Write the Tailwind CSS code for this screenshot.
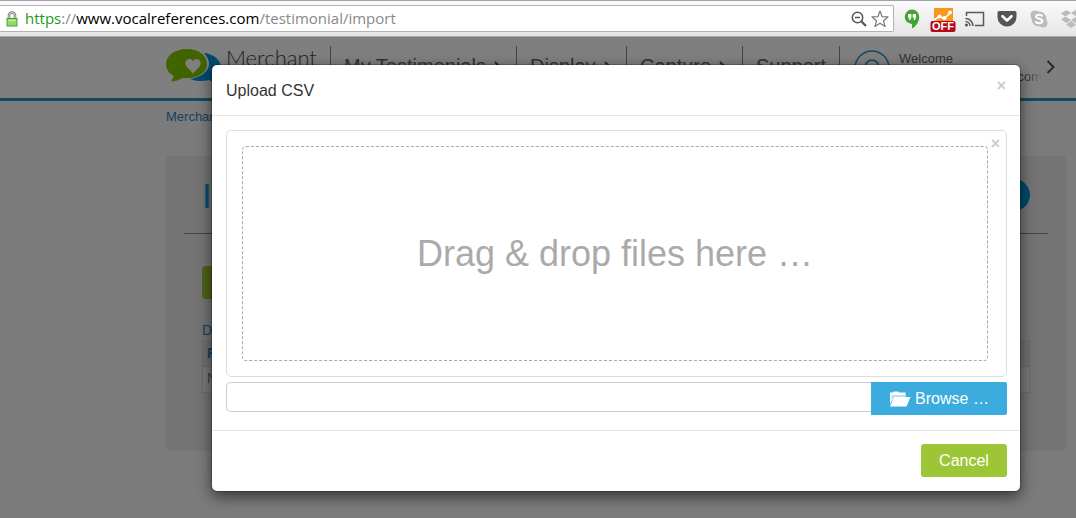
<!DOCTYPE html>
<html lang="en">
<head>
    <meta charset="UTF-8">
    <meta name="viewport" content="width=device-width, initial-scale=1.0">
    <title>Upload CSV</title>
    <script src="https://cdn.jsdelivr.net/npm/@tailwindcss/browser@4"></script>
</head>
<body class="h-screen flex flex-col overflow-hidden font-['Liberation_Sans',Arial,sans-serif]">
    <!-- Browser toolbar -->
    <div class="h-[37px] shrink-0 flex items-center border-t border-b border-t-[#a3a1ac] border-b-[#a9a9a9] bg-linear-to-b from-[#fbfafc] to-[#e6e6e6]">
        <div class="h-[27px] w-[894px] shrink-0 flex items-center border border-l-0 border-[#b3b3b3] rounded-r-xs bg-white pl-[6px] pr-1">
            <svg class="w-3 h-4 shrink-0" viewBox="0 0 12 16">
                <path d="M3 8V4.500a3 3 0 0 1 6 0V8" fill="none" stroke="#777" stroke-width="2.600"/>
                <path d="M3 8V4.500a3 3 0 0 1 6 0V8" fill="none" stroke="#ddd" stroke-width="1"/>
                <rect x="1" y="7.500" width="10" height="7.500" fill="#8fdc6a" stroke="#4f9e33"/>
                <path d="M2 9.500h8" stroke="#c0f0a4"/>
            </svg>
            <div role="textbox" aria-label="Address" class="ml-[7px] pb-[2px] flex-1 whitespace-nowrap text-[15px] leading-5 font-['Open_Sans','Noto_Sans',sans-serif] text-[#888]"><span class="text-[#1a9a1a]">https</span>://<span class="text-black">www.vocalreferences.com</span>/testimonial/import</div>
            <svg class="w-4 h-4 mr-1 shrink-0" viewBox="0 0 16 16" fill="none" stroke="#555">
                <circle cx="6.500" cy="6.500" r="5.200" stroke-width="1.500"/>
                <path d="M4 6.500h5" stroke-width="1.500"/>
                <path d="M10.500 10.500l4.500 4.500" stroke-width="2.200"/>
            </svg>
            <svg class="w-[18px] h-[18px] shrink-0" viewBox="0 0 18 18" fill="#fff" stroke="#777" stroke-width="1.200" stroke-linejoin="round">
                <path d="M9 1l2.100 5.700 6 .2-4.700 3.800 1.700 5.900L9 13.200l-5.100 3.400 1.700-5.900L.9 6.900l6-.2z"/>
            </svg>
        </div>
        <div class="flex items-center gap-[9px] pl-[9px]">
            <svg class="w-[18px] h-5 shrink-0" viewBox="0 0 18 20">
                <path d="M9 .5a7.200 7.200 0 0 0 0 14.500v4.500c3.500-1.800 7.200-6 7.200-11.500A7.300 7.300 0 0 0 9 .5z" fill="#3fa535"/>
                <path d="M5 5h3.400v3.500L7.200 11H5.700l.9-2.300H5zM9.700 5h3.400v3.500L11.900 11h-1.500l.9-2.300H9.700z" fill="#fff"/>
            </svg>
            <div class="relative w-[26px] h-6 shrink-0 mt-[3px]">
                <svg class="w-[26px] h-6" viewBox="0 0 26 24">
                    <rect x="4" y="0" width="19" height="16" fill="#f8971d"/>
                    <path d="M4 12l6-4 4 3 7-7" fill="none" stroke="#fff" stroke-width="1.600"/>
                    <circle cx="9.500" cy="8.500" r="2" fill="#fff"/><circle cx="14.500" cy="10" r="2" fill="#fff"/><circle cx="20" cy="4.500" r="2" fill="#fff"/>
                    <rect x="0.500" y="13" width="25" height="11" rx="2" fill="#b5081c"/>
                </svg>
                <span class="absolute inset-x-0 bottom-0 text-center text-[11px] leading-[11px] font-bold text-white">OFF</span>
            </div>
            <svg class="w-5 h-4 shrink-0" viewBox="0 0 20 16" fill="none" stroke="#5a5a5a" stroke-width="1.500">
                <path d="M1.500 5V1.500h17v13H10"/>
                <path d="M.5 7.500a7.500 7.500 0 0 1 7.500 7.500M.5 10.500A4.500 4.500 0 0 1 5 15"/>
                <circle cx="1.500" cy="14" r=".8"/>
            </svg>
            <svg class="w-5 h-4 ml-[3px] shrink-0" viewBox="0 0 20 16">
                <path d="M2 0h16a1.500 1.500 0 0 1 1.500 1.500V6a9.500 9.500 0 0 1-19 0V1.500A1.500 1.500 0 0 1 2 0z" fill="#555"/>
                <path d="M5.500 5.200L10 9.500l4.500-4.300" fill="none" stroke="#fff" stroke-width="2.600" stroke-linecap="round" stroke-linejoin="round"/>
            </svg>
            <svg class="w-[18px] h-[18px] ml-1 shrink-0" viewBox="0 0 18 18">
                <circle cx="9" cy="9" r="7.500" fill="#bbb"/><circle cx="5" cy="5" r="4.600" fill="#bbb"/><circle cx="13" cy="13" r="4.600" fill="#bbb"/>
                <path d="M12.300 6.500C11.800 4.300 6 4 6 6.600c0 2.700 6.400 1.700 6.400 4.500 0 2.900-6.300 2.600-6.800.2" fill="none" stroke="#fff" stroke-width="2"/>
            </svg>
            <svg class="w-5 h-[18px] ml-1 shrink-0" viewBox="0 0 20 18" fill="#bbb">
                <path d="M5.500 0L10 3 4.500 6.500 0 3.500zM14.500 0L20 3.500l-4.500 3L10 3zM0 9.500l4.500-3L10 10l-4.500 3zM15.500 6.500l4.500 3-5.500 3.500L10 10zM5 14.500l5-3.500 5 3.500-5 3.500z"/>
            </svg>
        </div>
    </div>

    <div class="relative flex-1 bg-[#f6f6f6]">
        <!-- Page -->
        <header class="h-16 flex items-start border-b-3 border-[#2d8fc8] bg-white pl-[166px] pr-5 pt-[9px] text-[#666]">
            <a href="#" class="flex w-[165px] items-start gap-1">
                <svg class="w-14 h-9 mt-[2px] shrink-0" viewBox="0 0 56 36">
                    <path d="M38 5c10 1 17 7 17 15 0 5-3 8-6 10l4 5c-5 0-8-2-10-3-7 2-14 1-19-1 9-1 19-7 19-15 0-4-2-8-5-11z" fill="#0096e0"/>
                    <path d="M21 1C9 1 0 7.500 0 16c0 5 3 9.500 8 12l-3 5.500c5-.5 9-2 12-3.500 13 1.500 24-4.500 24-14C41 7 32 1 21 1z" fill="#82c800"/>
                    <path d="M27 25.500l-6.500-7c-4-5.500 3-10.500 6.500-5.500 3.500-5 10.500 0 6.500 5.500z" fill="#fff"/>
                </svg>
                <span class="font-['Lato'] font-light text-[22px] leading-6 text-[#444]">Merchant</span>
            </a>
            <nav class="flex text-xl leading-6">
                <a href="#" class="h-10 w-[186px] flex items-start border-l border-[#888] pl-[13px] pt-2">My Testimonials<svg class="w-2 h-3 ml-2 mt-[7px]" viewBox="0 0 8 12" fill="none" stroke="#555" stroke-width="2"><path d="M1 1l5 5-5 5"/></svg></a>
                <a href="#" class="h-10 w-[110px] flex items-start border-l border-[#888] pl-[13px] pt-2">Display<svg class="w-2 h-3 ml-2 mt-[7px]" viewBox="0 0 8 12" fill="none" stroke="#555" stroke-width="2"><path d="M1 1l5 5-5 5"/></svg></a>
                <a href="#" class="h-10 w-[116px] flex items-start border-l border-[#888] pl-[13px] pt-2">Capture<svg class="w-2 h-3 ml-2 mt-[7px]" viewBox="0 0 8 12" fill="none" stroke="#555" stroke-width="2"><path d="M1 1l5 5-5 5"/></svg></a>
                <a href="#" class="h-10 w-[97px] flex items-start border-l border-[#888] pl-[13px] pt-2">Support</a>
            </nav>
            <div class="h-10 flex-1 flex items-start border-l border-[#888] pl-[14px] pt-1">
                <svg class="w-9 h-9 shrink-0" viewBox="0 0 36 36" fill="none" stroke="#2d8fc8" stroke-width="1.600">
                    <circle cx="18" cy="18" r="17"/><circle cx="18" cy="16.500" r="6.500"/><path d="M7 30c2-8 20-8 22 0"/>
                </svg>
                <div class="ml-[9px] w-[143px] text-[13px] leading-[18px]">
                    <div>Welcome</div>
                    <div class="text-right"><span class="bg-linear-to-r from-[#555] from-40% to-white bg-clip-text text-transparent">.com</span></div>
                </div>
                <svg class="w-[10px] h-4 ml-1 mt-[9px] shrink-0" viewBox="0 0 10 16" fill="none" stroke="#555" stroke-width="2"><path d="M1.500 2l6 6-6 6"/></svg>
            </div>
        </header>
        <main class="pl-[166px] pr-[10px] pt-[7px]">
            <a href="#" class="block text-[13px] leading-[18px] text-[#2d84c0]">Merchant</a>
            <section class="mt-[30px] h-[295px] rounded bg-[#e9e9e9] px-[18px] pt-[23px]">
                <div class="h-[55px] flex items-start justify-between border-b border-[#888] px-[18px]">
                    <h1 class="text-[35px] leading-[34px] text-[#00a0dc]">Import</h1>
                    <span class="size-8 rounded-full bg-[#0096d2]"></span>
                </div>
                <div class="px-[18px] pt-8 text-[14px] text-[#2d84c0]">
                    <button class="block h-[33px] w-24 rounded bg-[#9dc62d]"></button>
                    <a href="#" class="mt-[21px] mb-px block leading-5">D</a>
                    <table class="w-full border border-[#d5d5d5] text-left">
                        <tr class="h-[25px] border-b border-[#d5d5d5] bg-[#e0e0e0]"><th class="pl-1 pb-[3px] leading-5">F</th></tr>
                        <tr class="h-[26px] bg-[#f3f3f3] text-[#a0705a]"><td class="pl-1 pb-[3px] leading-5">N</td></tr>
                    </table>
                </div>
            </section>
        </main>

        <!-- Modal -->
        <div class="absolute inset-0 bg-black/50 pl-[212px] pr-14 pt-7">
            <div role="dialog" aria-labelledby="modalTitle" class="rounded-[5px] bg-white shadow-[0_5px_15px_rgba(0,0,0,0.6),0_0_0_1px_rgba(0,0,0,0.2)]">
                <div class="h-[51px] flex items-start justify-between border-b border-[#e5e5e5] pl-[14px] pr-[14px] pt-[13px]">
                    <h4 id="modalTitle" class="text-base leading-[26px] text-[#333]">Upload CSV</h4>
                    <button aria-label="Close" class="text-base leading-4 font-bold text-[#ccc]">×</button>
                </div>
                <div class="pl-[14px] pt-[14px] pb-[15px] pr-[13px]">
                    <div class="relative h-[247px] rounded-[5px] border border-[#ddd] pl-[15px] pr-[18px] py-[15px]">
                        <button aria-label="Remove" class="absolute right-[6px] top-[5px] text-base leading-4 font-bold text-[#ccc]">×</button>
                        <div class="h-full flex items-center justify-center rounded border border-dashed border-[#aaa] text-4xl text-[#aaa]">Drag &amp; drop files here …</div>
                    </div>
                    <div class="mt-[5px] flex items-start">
                        <input type="text" aria-label="File name" class="h-[30px] min-w-0 flex-1 rounded-l-[5px] border border-r-0 border-[#ccc] px-3">
                        <button class="h-[33px] w-[136px] flex items-center justify-center gap-1 rounded-r-xs bg-[#3bacdd] text-base text-white">
                            <svg class="w-[22px] h-4" viewBox="0 0 22 16">
                                <path d="M1 13V1.500h3L5 .5h4l1 1h6.500V6H5z" fill="#fff"/>
                                <path d="M2.500 4h14.500v2H5L2.500 9z" fill="#b8e0f2"/>
                                <path d="M5 6h16.500l-4 9.500H1z" fill="#fff"/>
                            </svg>
                            Browse …
                        </button>
                    </div>
                </div>
                <div class="flex justify-end border-t border-[#e5e5e5] pt-[13px] pr-[13px] pb-[14px]">
                    <button class="h-[33px] w-[86px] rounded-[3px] bg-[#9dc636] text-base text-white">Cancel</button>
                </div>
            </div>
        </div>
    </div>
</body>
</html>
